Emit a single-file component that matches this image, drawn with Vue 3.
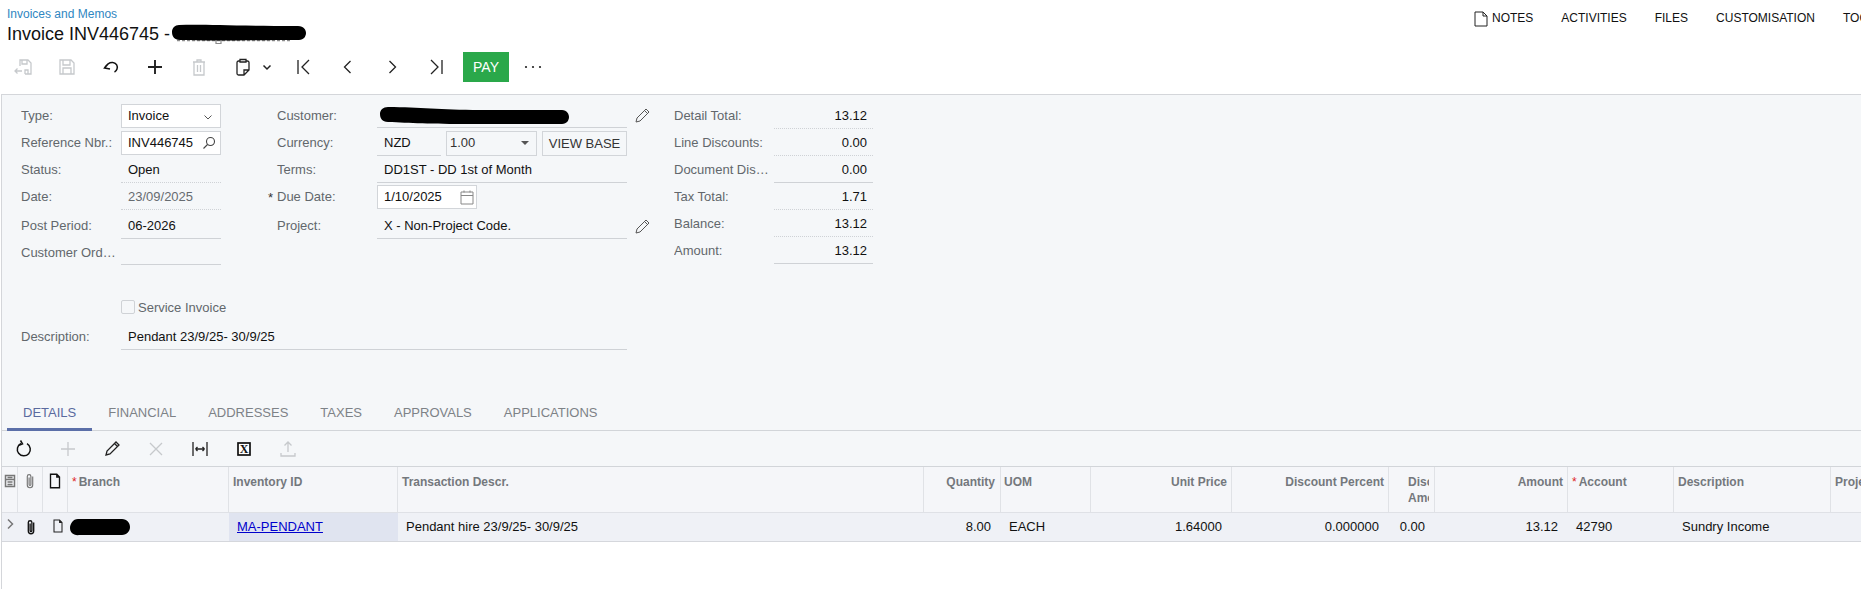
<script setup>
const links = ['NOTES', 'ACTIVITIES', 'FILES', 'CUSTOMISATION', 'TOOLS']

const tools = [
  { d: 'M7 9V3h8l3 3v11h-6M9 3v4h5V3M12 17v-4h3v4M2 14h7M4.500 11.500 2 14l2.500 2.500', off: true },
  { d: 'M3 3h11l3 3v11H3zM6 3v5h7V3M6 17v-6h8v6', off: true },
  { d: 'M3.500 11C6 7 9 5 12 5.500 15.500 6 17 9 16 12 15.500 13.500 14.500 14.500 13.500 15M7.500 6.500 3.500 11 9 12', mid: true },
  { d: 'M10 3v14M3 10h14', bold: true },
  { d: 'M4 5h12M8 5V3h4v2M5 5v13h10V5M8.500 8v7M11.500 8v7', off: true },
  { d: 'M7 4H5.500C4.700 4 4 4.700 4 5.500v11C4 17.300 4.700 18 5.500 18H11l5-5V5.500C16 4.700 15.300 4 14.500 4H13M7 2.500h6V5H7zM11 18v-5h5', drop: true },
  { d: 'M4 3v14M15 3l-7 7 7 7' },
  { d: 'M12.500 4l-6 6 6 6' },
  { d: 'M7.500 4l6 6-6 6' },
  { d: 'M16 3v14M5 3l7 7-7 7' }
]

const gridTools = [
  { d: 'M7 4.500A6.500 6.500 0 1 0 13 4.700M6.500 1.500l2 3.300L5 6.300', mid: true },
  { d: 'M10 3v14M3 10h14', off: true },
  { d: 'M4 16l1-4 9-9 3 3-9 9zM12.500 4.500l3 3' },
  { d: 'M4 4l12 12M16 4 4 16', off: true },
  { d: 'M3 3v14M17 3v14M5.500 10h9M5.500 10l2-2M5.500 10l2 2M14.500 10l-2-2M14.500 10l-2 2' },
  { excel: true },
  { d: 'M10 13V3M6.500 6.500 10 3l3.500 3.500M3 14v3h14v-3', off: true }
]

const tabs = ['DETAILS', 'FINANCIAL', 'ADDRESSES', 'TAXES', 'APPROVALS', 'APPLICATIONS']

const totals = [
  { label: 'Detail Total:', value: '13.12', line: 'dotted' },
  { label: 'Line Discounts:', value: '0.00', line: 'dotted' },
  { label: 'Document Dis…', value: '0.00', line: 'solid' },
  { label: 'Tax Total:', value: '1.71', line: 'dotted' },
  { label: 'Balance:', value: '13.12', line: 'dotted' },
  { label: 'Amount:', value: '13.12', line: 'solid' }
]

const clip = 'M13 5v9.500a3 3 0 0 1-6 0V5a2 2 0 0 1 4 0v9a.8.8 0 0 1-2 0V6'
const doc = 'M5 2.500h7l3 3v12H5zM12 2.500v3h3'

const columns = [
  { key: 'branch', title: 'Branch', req: true },
  { key: 'inv', title: 'Inventory ID' },
  { key: 'descr', title: 'Transaction Descr.' },
  { key: 'qty', title: 'Quantity', right: true, value: '8.00' },
  { key: 'uom', title: 'UOM', value: 'EACH' },
  { key: 'price', title: 'Unit Price', right: true, value: '1.64000' },
  { key: 'pct', title: 'Discount Percent', right: true, value: '0.000000' },
  { key: 'disc', title: 'Disc. Amount', clipped: true, right: true, value: '0.00' },
  { key: 'amt', title: 'Amount', right: true, value: '13.12' },
  { key: 'acct', title: 'Account', req: true, value: '42790' },
  { key: 'desc', title: 'Description', value: 'Sundry Income' },
  { key: 'proj', title: 'Project' }
]
</script>

<template>
  <div class="page">
    <header class="head">
      <div class="titles">
        <a class="crumb">Invoices and Memos</a>
        <h1 class="title">
          Invoice INV446745 -
          <svg class="title-mask" width="136" height="22" viewBox="0 0 136 22">
            <path d="M5 16.500H120" stroke="#8a8a8a" stroke-width="1.500" stroke-dasharray="3 2" fill="none" />
            <path d="M44 16.500v3h5v-3" stroke="#8a8a8a" stroke-width="1.200" fill="none" />
            <path d="M7 1C30 0 60 2 126 2c6 0 8 4 8 7s-2 7-7 7C90 16 40 17 8 16 2 16 0 12 0 8s3-7 7-7z" />
          </svg>
        </h1>
      </div>
      <nav class="links">
        <svg class="link-doc" width="14" height="16" viewBox="0 0 14 16">
          <path d="M1 1h8l4 4v10H1zM9 1v4h4" fill="none" stroke="#222" stroke-width="1" />
        </svg>
        <a v-for="l in links" :key="l" class="link">{{ l }}</a>
      </nav>
    </header>

    <div class="toolbar">
      <template v-for="(t, i) in tools" :key="i">
        <button class="tool" :class="{ wide: t.drop }">
          <svg width="20" height="20" viewBox="0 0 20 20" class="ic" :class="{ off: t.off, bold: t.bold, mid: t.mid }"><path :d="t.d" /></svg>
          <svg v-if="t.drop" class="ic drop" width="10" height="10" viewBox="0 0 10 10"><path d="M1.500 3.500 5 7l3.500-3.500" /></svg>
        </button>
      </template>
      <button class="pay">PAY</button>
      <button class="tool more">
        <svg width="20" height="6" viewBox="0 0 20 6"><circle cx="3" cy="3" r="1.100" /><circle cx="10" cy="3" r="1.100" /><circle cx="17" cy="3" r="1.100" /></svg>
      </button>
    </div>

    <main class="panel">
      <section class="form">
        <div class="form-left">
          <div class="form-cols">
            <div class="col col-a">
              <div class="row"><label>Type:</label><div class="box">Invoice<svg class="ic chev" width="10" height="10" viewBox="0 0 10 10"><path d="M1.500 3.500 5 7l3.500-3.500" /></svg></div></div>
              <div class="row"><label>Reference Nbr.:</label><div class="box">INV446745<svg class="ic search" width="14" height="14" viewBox="0 0 14 14"><circle cx="8.500" cy="5.500" r="4" /><path d="M5.500 8.500 1.500 12.500" /></svg></div></div>
              <div class="row"><label>Status:</label><div class="val dotted">Open</div></div>
              <div class="row"><label>Date:</label><div class="val dotted muted">23/09/2025</div></div>
              <div class="row shift"><label>Post Period:</label><div class="val solid">06-2026</div></div>
              <div class="row"><label>Customer Ord…</label><div class="val solid"></div></div>
            </div>
            <div class="col col-b">
              <div class="row">
                <label>Customer:</label>
                <div class="val solid">
                  <svg class="mask" width="190" height="18" viewBox="0 0 190 18"><path d="M8 0C40 0 60 3 100 3h82c5 0 7 4 7 7s-2 7-7 7H90C50 17 30 16 8 15 2 15 0 11 0 7s3-7 8-7z" /></svg>
                </div>
                <svg class="ic pen" width="20" height="20" viewBox="0 0 20 20"><path d="M4 16l1-4 9-9 3 3-9 9zM12.500 4.500l3 3" /></svg>
              </div>
              <div class="row">
                <label>Currency:</label>
                <div class="currency">
                  <div class="val solid nzd">NZD</div>
                  <div class="box rate">1.00<i class="caret"></i></div>
                  <button class="view-base">VIEW BASE</button>
                </div>
              </div>
              <div class="row"><label>Terms:</label><div class="val solid">DD1ST - DD 1st of Month</div></div>
              <div class="row">
                <label><span class="star">*</span>Due Date:</label>
                <div class="box date">1/10/2025
                  <svg class="ic cal" width="14" height="15" viewBox="0 0 14 15"><path d="M1 2h12v12H1zM1 5.500h12M4 .5v2M10 .5v2" /></svg>
                </div>
              </div>
              <div class="row shift">
                <label>Project:</label>
                <div class="val solid">X - Non-Project Code.</div>
                <svg class="ic pen" width="20" height="20" viewBox="0 0 20 20"><path d="M4 16l1-4 9-9 3 3-9 9zM12.500 4.500l3 3" /></svg>
              </div>
            </div>
          </div>
          <div class="check-row"><span class="check"></span>Service Invoice</div>
          <div class="row desc-row"><label>Description:</label><div class="val solid">Pendant 23/9/25- 30/9/25</div></div>
        </div>
        <div class="col col-c">
          <div v-for="t in totals" :key="t.label" class="row">
            <label>{{ t.label }}</label>
            <div class="val num" :class="t.line">{{ t.value }}</div>
          </div>
        </div>
      </section>

      <nav class="tabs">
        <a v-for="(t, i) in tabs" :key="t" class="tab" :class="{ active: i === 0 }">{{ t }}</a>
      </nav>

      <div class="grid-tools">
        <button v-for="(t, i) in gridTools" :key="i" class="tool">
          <svg v-if="t.excel" width="18" height="18" viewBox="0 0 18 18" class="excel">
            <rect x="3" y="3" width="12" height="12" fill="#fff" stroke="#111" stroke-width="1.700" />
            <text x="9" y="13" text-anchor="middle">X</text>
          </svg>
          <svg v-else width="20" height="20" viewBox="0 0 20 20" class="ic" :class="{ off: t.off, mid: t.mid }"><path :d="t.d" /></svg>
        </button>
      </div>

      <div class="grid">
        <div class="grid-row grid-head">
          <div class="cell icon-cell">
            <svg class="ic hint heavy" width="12" height="14" viewBox="0 0 12 14"><path d="M1.500 1.500h9v4h-9zM1.500 5.500v7h9v-7M3.500 3.500h5M3.500 8h5M3.500 10.500h5" /></svg>
          </div>
          <div class="cell icon-cell">
            <svg class="ic hint" width="18" height="18" viewBox="0 0 20 20"><path :d="clip" /></svg>
          </div>
          <div class="cell icon-cell">
            <svg class="ic dark" width="18" height="18" viewBox="0 0 20 20"><path :d="doc" /></svg>
          </div>
          <div v-for="c in columns" :key="c.key" class="cell" :class="[c.key, { right: c.right }]">
            <div v-if="c.clipped" class="clip-title">Disc.<br />Amount</div>
            <template v-else><span v-if="c.req" class="req">*</span>{{ c.title }}</template>
          </div>
        </div>
        <div class="grid-row grid-data">
          <div class="cell icon-cell">
            <svg class="ic hint heavy" width="10" height="12" viewBox="0 0 10 12"><path d="M3 1.500 7.500 6 3 10.500" /></svg>
          </div>
          <div class="cell icon-cell">
            <svg class="ic dark" width="18" height="18" viewBox="0 0 20 20"><path :d="clip" /></svg>
          </div>
          <div class="cell icon-cell shift-doc">
            <svg class="ic" width="16" height="16" viewBox="0 0 20 20"><path :d="doc" /></svg>
          </div>
          <div v-for="c in columns" :key="c.key" class="cell" :class="[c.key, { right: c.right }]">
            <svg v-if="c.key === 'branch'" class="branch-mask" width="60" height="17" viewBox="0 0 60 17"><path d="M8 0h44c5 0 8 4 8 8s-3 8-8 8H10C3 17 0 13 0 9s3-9 8-9z" /></svg>
            <a v-else-if="c.key === 'inv'" class="inv-link">MA-PENDANT</a>
            <template v-else-if="c.key === 'descr'">Pendant hire 23/9/25- 30/9/25</template>
            <template v-else>{{ c.value }}</template>
          </div>
        </div>
      </div>
    </main>
  </div>
</template>

<style>
html, body { margin: 0; background: #fff; overflow: hidden; }
</style>

<style scoped>
.page {
  width: 1861px;
  height: 589px;
  overflow: hidden;
  display: flex;
  flex-direction: column;
  font-family: "Liberation Sans", Arial, sans-serif;
  font-size: 13px;
  color: #111;
  background: #fff;
}
button { font-family: inherit; padding: 0; background: none; border: 0; }
.head { display: flex; justify-content: space-between; height: 45px; flex: none; }
.titles { padding: 7px 0 0 7px; }
.crumb { display: block; font-size: 12px; line-height: 14px; color: #2f86c1; }
.title {
  margin: 2px 0 0;
  font-size: 18px;
  font-weight: 400;
  line-height: 22px;
  color: #111;
  white-space: nowrap;
  display: flex;
  gap: 2px;
}
.title-mask { margin-top: 1px; }
.links { width: 387px; flex: none; display: flex; gap: 28px; padding: 11px 0 0 18px; white-space: nowrap; position: relative; box-sizing: border-box; overflow: hidden; }
.link-doc { position: absolute; left: 0; top: 11px; }
.link { font-size: 12px; line-height: 14px; color: #111; }
.toolbar { margin: 7px 0 12px 1px; height: 30px; display: flex; align-items: center; flex: none; }
.tool {
  width: 44px;
  height: 30px;
  display: flex;
  align-items: center;
  justify-content: center;
  flex: none;
  position: relative;
}
.tool.wide { width: 61px; justify-content: flex-start; padding-left: 12px; box-sizing: border-box; gap: 9px; }
.ic { fill: none; stroke: #222; stroke-width: 1.3; flex: none; }
.ic.off { stroke: #c6c9cc; }
.ic.bold { stroke-width: 1.9; }
.ic.mid { stroke: #111; stroke-width: 1.5; }
.ic.drop { stroke-width: 1.5; }
.ic.hint { stroke: #777; }
.ic.heavy { stroke-width: 1.500; }
.ic.dark { stroke: #111; stroke-width: 1.500; }
.pay {
  margin-left: 5px;
  width: 46px;
  height: 30px;
  background: #2aa84a;
  color: #fff;
  font-size: 14px;
}
.more { margin-left: 2px; }
.more svg { fill: #222; }
.panel {
  flex: 1;
  margin-left: 1px;
  border-left: 1px solid #d4d6da;
  border-top: 1px solid #d4d6da;
  background: #fff;
  display: flex;
  flex-direction: column;
  min-width: 0;
}
.form {
  height: 295px;
  flex: none;
  box-sizing: border-box;
  padding: 9px 0 0 19px;
  background: #f5f7f9;
  display: flex;
  gap: 19px;
}
.form-left { width: 634px; flex: none; }
.form-cols { display: flex; }
.col { display: flex; flex-direction: column; gap: 3px; }
.col-a { width: 247px; flex: none; }
.col-b { width: 387px; flex: none; padding-left: 9px; box-sizing: border-box; }
.row { display: grid; grid-template-columns: 100px 100px; height: 24px; align-items: stretch; position: relative; }
.col-b .row { grid-template-columns: 100px 250px 20px; }
.col-c .row { grid-template-columns: 100px 99px; }
.shift { margin-top: 2px; }
.row label {
  color: #62676c;
  line-height: 23px;
  white-space: nowrap;
  overflow: hidden;
  position: relative;
}
.col-b .row label { overflow: visible; }
.star { position: absolute; left: -9px; top: 1px; color: #333; }
.val {
  line-height: 24px;
  padding-left: 7px;
  box-sizing: border-box;
  white-space: nowrap;
  color: #111;
}
.solid { border-bottom: 1px solid #cfd2d6; }
.dotted { border-bottom: 1px dotted #cfd2d6; }
.muted { color: #666b70; }
.num { text-align: right; padding: 0 6px 0 0; }
.box {
  border: 1px solid #d2d5d9;
  background: #fff;
  padding-left: 6px;
  line-height: 22px;
  box-sizing: border-box;
  position: relative;
  white-space: nowrap;
}
.chev { position: absolute; right: 7px; top: 7px; stroke: #555; stroke-width: 1; }
.search { position: absolute; right: 4px; top: 4px; stroke: #444; stroke-width: 1.1; }
.cal { position: absolute; right: 2px; top: 4px; stroke: #888; stroke-width: 1; }
.pen { margin-left: 5px; align-self: center; stroke: #555; stroke-width: 1; }
.mask { margin: 3px 0 0 -4px; display: block; }
.currency { display: grid; grid-template-columns: 64px 91px 85px; gap: 5px; }
.currency > * { min-width: 0; }
.rate { background: #f5f7f9; color: #333; padding-left: 3px; }
.caret {
  position: absolute;
  right: 7px;
  top: 9px;
  border: 4px solid transparent;
  border-top-color: #555;
  border-bottom: 0;
}
.view-base {
  border: 1px solid #d2d5d9;
  background: #f5f7f9;
  color: #333;
  font-size: 13px;
  white-space: nowrap;
}
.date { width: 100px; }
.check-row {
  margin: 33px 0 0 100px;
  height: 18px;
  display: flex;
  align-items: center;
  gap: 3px;
  color: #62676c;
}
.check {
  width: 12px;
  height: 12px;
  border: 1px solid #cfd2d6;
  border-radius: 2px;
  background: #f5f7f9;
}
.desc-row { margin-top: 9px; grid-template-columns: 100px 506px; }
.tabs {
  height: 41px;
  flex: none;
  box-sizing: border-box;
  background: #f5f7f9;
  border-bottom: 1px solid #d2d5d9;
  padding-left: 5px;
  display: flex;
  align-items: flex-end;
}
.tab {
  padding: 0 16px 8px;
  height: 26px;
  box-sizing: border-box;
  line-height: 16px;
  color: #7d8287;
  margin-bottom: -1px;
}
.tab.active {
  color: #5a6a9f;
  border-bottom: 3px solid #5b6fa8;
  padding-bottom: 5px;
  margin-top: -1px;
}
.grid-tools {
  height: 36px;
  flex: none;
  background: #f5f7f9;
  border-bottom: 1px solid #d2d5d9;
  box-sizing: border-box;
  display: flex;
  align-items: center;
}
.excel text {
  font-family: "Liberation Serif", serif;
  font-weight: 700;
  font-size: 12px;
  fill: #111;
}
.grid-row {
  display: grid;
  grid-template-columns: 16px 25px 25px 161px 169px 526px 77px 90px 141px 157px 46px 133px 106px 157px 100px;
}
.grid-head {
  height: 46px;
  box-sizing: border-box;
  background: #f5f6f9;
  border-bottom: 1px solid #dfe1e6;
  font-size: 12px;
  font-weight: 700;
  color: #74787d;
}
.grid-head .cell {
  padding: 7px 4px 0;
  line-height: 16px;
  border-right: 1px solid #e0e2e6;
  box-sizing: border-box;
  white-space: nowrap;
  overflow: hidden;
}
.grid-head .icon-cell { padding: 7px 0 0; }
.grid-head .icon-cell:nth-child(2), .grid-head .icon-cell:nth-child(3) { padding-top: 5px; }
.grid-head .qty { padding-right: 5px; }
.grid-head .uom { padding-left: 3px; }
.cell.right { text-align: right; }
.icon-cell { display: flex; justify-content: center; align-items: flex-start; }
.req { color: #e0251f; margin-right: 2px; font-weight: 400; }
.clip-title { width: 21px; margin-left: 15px; text-align: left; overflow: hidden; }
.grid-data {
  height: 29px;
  box-sizing: border-box;
  background: #eff1f6;
  border-bottom: 1px solid #d5d7dc;
  line-height: 28px;
  color: #111;
}
.grid-data .cell { padding: 0 8px; white-space: nowrap; overflow: hidden; box-sizing: border-box; }
.grid-data .cell.right { padding-right: 10px; }
.grid-data .icon-cell { padding: 5px 0 0; }
.grid-data .shift-doc { padding-left: 4px; }
.grid-data .branch { padding: 6px 0 0 2px; }
.branch-mask { display: block; }
.grid-data .inv { background: #e0e4f0; padding-left: 8px; }
.inv-link { color: #0000cc; text-decoration: underline; }
</style>
